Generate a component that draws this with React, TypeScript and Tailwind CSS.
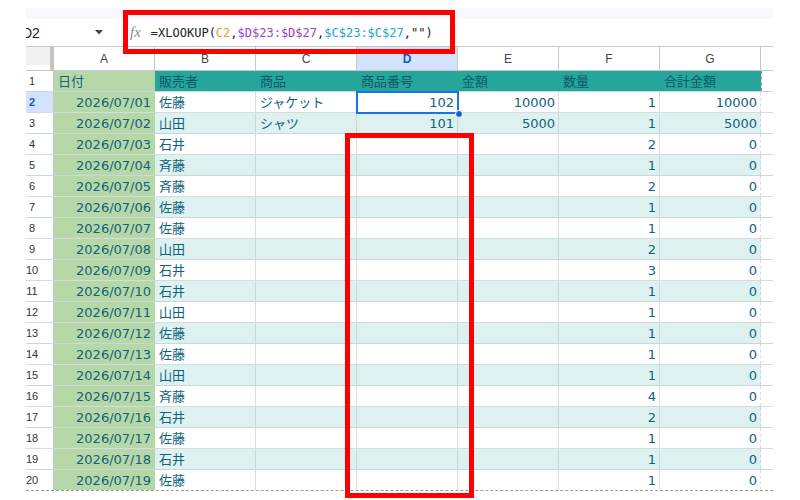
import React from "react";

const rows: [string, string, string, string, string, string, string][] = [
  ["2026/07/01", "佐藤", "ジャケット", "102", "10000", "1", "10000"],
  ["2026/07/02", "山田", "シャツ", "101", "5000", "1", "5000"],
  ["2026/07/03", "石井", "", "", "", "2", "0"],
  ["2026/07/04", "斉藤", "", "", "", "1", "0"],
  ["2026/07/05", "斉藤", "", "", "", "2", "0"],
  ["2026/07/06", "佐藤", "", "", "", "1", "0"],
  ["2026/07/07", "佐藤", "", "", "", "1", "0"],
  ["2026/07/08", "山田", "", "", "", "2", "0"],
  ["2026/07/09", "石井", "", "", "", "3", "0"],
  ["2026/07/10", "石井", "", "", "", "1", "0"],
  ["2026/07/11", "山田", "", "", "", "1", "0"],
  ["2026/07/12", "佐藤", "", "", "", "1", "0"],
  ["2026/07/13", "佐藤", "", "", "", "1", "0"],
  ["2026/07/14", "山田", "", "", "", "1", "0"],
  ["2026/07/15", "斉藤", "", "", "", "4", "0"],
  ["2026/07/16", "石井", "", "", "", "2", "0"],
  ["2026/07/17", "佐藤", "", "", "", "1", "0"],
  ["2026/07/18", "石井", "", "", "", "1", "0"],
  ["2026/07/19", "佐藤", "", "", "", "1", "0"],
];

const headers = ["日付", "販売者", "商品", "商品番号", "金額", "数量", "合計金額"];
const letters = ["A", "B", "C", "D", "E", "F", "G"];

const cellFont = { fontFamily: '"DejaVu Sans", Verdana, "Noto Sans CJK JP", sans-serif' };

export default function App() {
  return (
    <div className="relative w-[800px] h-[500px] bg-white overflow-hidden">
      <div className="ml-[26px] w-[747px] overflow-hidden">
        <div className="h-[8px] bg-white" />
        <div className="h-[11px] bg-[#f8f9fc]" />
        {/* formula bar */}
        <div className="h-[28px] flex items-center bg-white border-b border-[#c7c7c7]">
          <div className="w-[97px] flex items-center">
            <span
              className="ml-[-4px] text-[14px] text-[#222] leading-none"
              style={{ fontFamily: '"Liberation Sans", Arial, sans-serif' }}
            >
              D2
            </span>
            <svg className="ml-auto mr-[20px]" width="8" height="5" viewBox="0 0 8 5">
              <path d="M0 0 L8 0 L4 4.5 Z" fill="#444" />
            </svg>
          </div>
          <div className="w-[7px]" />
          <span
            className="italic text-[15px] text-[#8a8a8a] leading-none"
            style={{ fontFamily: '"Liberation Serif", serif' }}
          >
            fx
          </span>
          <span
            className="ml-[10px] text-[12px] text-[#222] leading-none whitespace-pre"
            style={{ fontFamily: '"DejaVu Sans Mono", monospace' }}
          >
            =XLOOKUP(<span className="text-[#f09b2c]">C2</span>,
            <span className="text-[#9c3fc4]">$D$23:$D$27</span>,
            <span className="text-[#22a6c9]">$C$23:$C$27</span>,"")
          </span>
        </div>
        {/* column headers */}
        <div
          className="flex h-[24px] border-b border-[#c7c7c7]"
          style={{ fontFamily: '"Liberation Sans", Arial, sans-serif' }}
        >
          <div className="w-[28px] h-full flex">
            <div className="flex-1 h-[18px] bg-[#f1f1f1]" />
            <div className="w-[4px] h-full bg-[#c4c4c4]" />
          </div>
          {letters.map((l) => (
            <div
              key={l}
              className={
                l === "D"
                  ? "w-[101px] h-full flex items-center justify-center border-r border-[#c7c7c7] bg-[#d3e3fd] text-[12px] font-bold text-[#0b57d0]"
                  : "w-[101px] h-full flex items-center justify-center border-r border-[#c7c7c7] text-[12px] text-[#444]"
              }
            >
              {l}
            </div>
          ))}
          <div className="w-[12px] h-full" />
        </div>
        {/* header row 1 */}
        <div className="flex h-[21px] border-b border-[#c9d9d7]" style={cellFont}>
          <div className="w-[28px] h-full flex items-center border-r border-[#c7c7c7]">
            <span className="w-[12px] text-center text-[11px] text-[#333]" style={{ fontFamily: '"Liberation Sans", Arial, sans-serif' }}>1</span>
          </div>
          {headers.map((h, i) => (
            <div
              key={h}
              className={
                i === 0
                  ? "w-[101px] h-full flex items-center pl-[4px] pt-px bg-[#b6d7a8] text-[13px] text-[#11637a] leading-none"
                  : "w-[101px] h-full flex items-center pl-[4px] pt-px bg-[#26a69a] text-[13px] text-[#0f5a6a] leading-none border-r border-[#26a69a]"
              }
            >
              {h}
            </div>
          ))}
          <div className="w-[12px] h-full border-l border-dashed border-[#999]" />
        </div>
        {rows.map((r, idx) => {
          const n = idx + 2;
          const alt = n % 2 === 1;
          const last = n === 20;
          return (
            <div
              key={n}
              className={
                last
                  ? "flex h-[21px] border-b border-dashed border-[#9a9a9a]"
                  : alt
                  ? "flex h-[21px] border-b border-[#c9d9d7]"
                  : "flex h-[21px] border-b border-[#d6dcdb]"
              }
              style={cellFont}
            >
              <div
                className={
                  n === 2
                    ? "w-[28px] h-full flex items-center bg-[#d3e3fd] border-r border-[#c7c7c7]"
                    : "w-[28px] h-full flex items-center bg-white border-r border-[#c7c7c7]"
                }
              >
                <span
                  className={
                    n === 2
                      ? "w-[12px] text-center text-[11px] font-bold text-[#0b57d0] whitespace-nowrap"
                      : "w-[12px] text-center text-[11px] text-[#333] whitespace-nowrap"
                  }
                  style={{ fontFamily: '"Liberation Sans", Arial, sans-serif' }}
                >
                  {n}
                </span>
              </div>
              {r.map((v, ci) => {
                const right = ci === 0 || ci >= 3;
                let cls = "w-[101px] h-full flex items-center pt-px text-[13px] text-[#11637a] leading-none border-r ";
                if (ci === 0) cls += "bg-[#b6d7a8] border-[#b6d7a8] ";
                else if (alt) cls += "bg-[#ddf2f0] border-[#c9d9d7] ";
                else cls += "bg-white border-[#dcdcdc] ";
                if (ci === 6) cls += "border-dashed border-[#999] ";
                cls += right ? "justify-end pr-[3px]" : "justify-start pl-[4px]";
                if (ci === 2) cls += " text-[#222]";
                return (
                  <div key={ci} className={cls}>
                    {v}
                  </div>
                );
              })}
              <div className="w-[12px] h-full" />
            </div>
          );
        })}
      </div>

      {/* selection */}
      <div className="absolute left-[356px] top-[91px] w-[103px] h-[23px] border-2 border-[#1a73e8] pointer-events-none" />
      <div className="absolute left-[455px] top-[110px] w-[8px] h-[8px] rounded-full bg-[#1a5fd6] border border-white" />

      {/* red annotation boxes */}
      <div className="absolute left-[123px] top-[10px] w-[332px] h-[44px] border-[5px] border-[#ff0000]" />
      <div className="absolute left-[345px] top-[133px] w-[129px] h-[365px] border-[5px] border-[#ff0000]" />
    </div>
  );
}
